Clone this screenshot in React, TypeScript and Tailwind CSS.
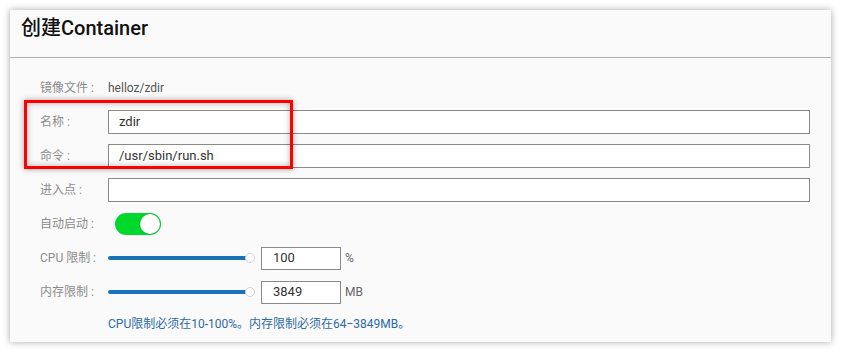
import React from 'react';

const font = { fontFamily: 'Roboto, "Noto Sans CJK SC", sans-serif' };

function Row({ label, children, className = 'h-[34px]' }: { label: string; children?: React.ReactNode; className?: string }) {
  return (
    <div className={`flex items-center ${className}`}>
      <div className="w-[68px] shrink-0 text-[12px] text-[#8c8c8c]">{label}</div>
      <div className="flex flex-1 items-center">{children}</div>
    </div>
  );
}

function TextInput({ value }: { value: string }) {
  return (
    <div className="flex h-[24px] flex-1 items-center border border-[#8a8a8a] bg-white pl-[10px] text-[13px] text-[#333]">
      {value}
    </div>
  );
}

function Slider() {
  return (
    <div className="relative flex h-[12px] w-[148px] items-center">
      <div className="h-[4px] w-[141px] rounded-full bg-[#1a72b8]" />
      <div className="absolute left-[137px] top-[1px] h-[10px] w-[10px] rounded-full border border-[#d0d0d0] bg-white" />
    </div>
  );
}

function NumberInput({ value, unit }: { value: string; unit: string }) {
  return (
    <div className="flex items-center">
      <div className="ml-[5px] flex h-[23px] w-[80px] items-center border border-[#8a8a8a] bg-white pl-[11px] text-[13px] text-[#333]">
        {value}
      </div>
      <span className="ml-[4px] text-[12px] text-[#666]">{unit}</span>
    </div>
  );
}

export default function App() {
  return (
    <div className="h-[352px] w-[841px] bg-white pl-[10px] pt-[10px]" style={font}>
      <div className="relative h-[332px] w-[821px] bg-[#fafafa] shadow-[0_0_7px_rgba(0,0,0,0.35)]">
        <div className="flex h-[48px] items-start border-b border-[#b0b0b0] pl-[11px] pt-[3px]">
          <h1 className="text-[20px] font-medium text-[#111]">创建Container</h1>
        </div>
        <div className="pl-[30px] pr-[21px] pt-[13px]">
          <Row label="镜像文件 :">
            <span className="text-[12px] text-[#555]">helloz/zdir</span>
          </Row>
          <Row label="名称 :">
            <TextInput value="zdir" />
          </Row>
          <Row label="命令 :">
            <TextInput value="/usr/sbin/run.sh" />
          </Row>
          <Row label="进入点 :">
            <TextInput value="" />
          </Row>
          <Row label="自动启动 :">
            <div className="ml-[7px] flex h-[22px] w-[46px] items-center justify-end rounded-full bg-[#00d82c] pr-[1px]">
              <div className="h-[20px] w-[20px] rounded-full bg-white shadow-[0_0_2px_rgba(0,0,0,0.3)]" />
            </div>
          </Row>
          <Row label="CPU 限制 :">
            <Slider />
            <NumberInput value="100" unit="%" />
          </Row>
          <Row label="内存限制 :">
            <Slider />
            <NumberInput value="3849" unit="MB" />
          </Row>
          <Row label="" className="h-[30px]">
            <span className="text-[12px] text-[#2c6ba3]">CPU限制必须在10-100%。内存限制必须在64−3849MB。</span>
          </Row>
        </div>
        <div className="absolute left-[14px] top-[90px] h-[69px] w-[269px] border-[3px] border-[#ff0000] shadow-[0_0_6px_rgba(0,0,0,0.35),inset_0_0_6px_rgba(0,0,0,0.3)]" />
      </div>
    </div>
  );
}
